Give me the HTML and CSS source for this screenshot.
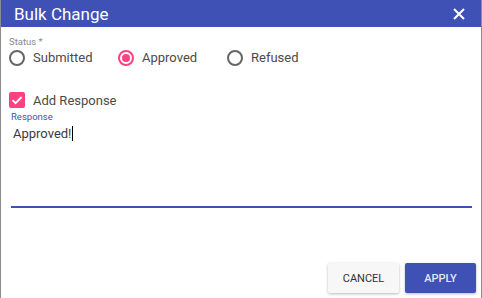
FILE: index.html
```html
<!DOCTYPE html>
<html lang="en">
<head>
  <meta charset="UTF-8"/>
  <title>Bulk Change</title>
  <link rel="stylesheet" href="styles.css">
</head>
<body>
  <div class="dialog">
    <div class="header">
      <span class="title">Bulk Change</span>
      <svg class="close" width="12" height="12" viewBox="0 0 12 12">
        <path d="M1 1 L11 11 M11 1 L1 11" stroke="#fff" stroke-width="2" fill="none"/>
      </svg>
    </div>

    <div class="content">
      <div class="field-label">Status *</div>
      <div class="radios">
        <label class="radio"><span class="ring"></span>Submitted</label>
        <label class="radio"><span class="ring checked"></span>Approved</label>
        <label class="radio"><span class="ring"></span>Refused</label>
      </div>

      <label class="check">
        <span class="box">
          <svg width="16" height="16" viewBox="0 0 16 16">
            <path d="M3.5 8.2 L6.6 11.2 L12.6 5" stroke="#fff" stroke-width="1.8" fill="none"/>
          </svg>
        </span>
        Add Response
      </label>

      <div class="response-label">Response</div>
      <div class="textarea">Approved!<span class="caret"></span></div>
    </div>

    <div class="actions">
      <button class="btn cancel">Cancel</button>
      <button class="btn apply">Apply</button>
    </div>
  </div>
</body>
</html>
```

FILE: styles.css
```css
body { margin: 0; font-family: Roboto, "Liberation Sans", sans-serif; background: #fff; }
.dialog { height: 298px; box-sizing: border-box; border-left: 1px solid #8c8c8c; border-right: 1px solid #8c8c8c; display: flex; flex-direction: column; }
.header { height: 27px; background: #3f51b5; color: #fff; display: flex; align-items: center; justify-content: space-between; padding: 0 16px 0 13px; }
.title { font-size: 17px; }
.content { flex: 1; padding: 0 9px 0 8px; }
.field-label { margin-top: 10px; font-size: 9.5px; line-height: 10px; color: #8a8a8a; }
.radios { display: flex; margin-top: 2px; }
.radio { width: 109px; display: flex; align-items: center; font-size: 13px; color: #4a4a4a; height: 17px; }
.ring { width: 16px; height: 16px; box-sizing: border-box; border: 2px solid #666; border-radius: 50%; margin-right: 8px; position: relative; }
.ring.checked { border-color: #ff4081; }
.ring.checked::after { content: ""; position: absolute; left: 2px; top: 2px; width: 8px; height: 8px; border-radius: 50%; background: #ff4081; }
.check { display: flex; align-items: center; margin-top: 26px; font-size: 13px; color: #4a4a4a; height: 16px; }
.box { width: 16px; height: 16px; background: #ff4081; border-radius: 2px; margin-right: 8px; display: flex; }
.response-label { margin-top: 4px; margin-left: 2px; font-size: 9.5px; line-height: 10px; color: #3f51b5; }
.textarea { margin-left: 2px; margin-top: 4px; height: 80px; border-bottom: 2px solid #3f51b5; font-size: 13px; line-height: 16px; color: #3a3a3a; padding-left: 2px; }
.caret { display: inline-block; width: 1px; height: 15px; background: #000; vertical-align: -3px; margin-left: 1px; }
.actions { display: flex; justify-content: flex-end; gap: 6px; padding: 0 5px 5px 0; }
.btn { width: 71px; height: 30px; border: none; border-radius: 2px; font-family: inherit; font-size: 11px; font-weight: 500; text-transform: uppercase; box-shadow: 0 1px 3px rgba(0,0,0,0.28); }
.cancel { background: #f7f7f7; color: #333; font-weight: 400; }
.apply { background: #3f51b5; color: #e3e6f5; }
```
